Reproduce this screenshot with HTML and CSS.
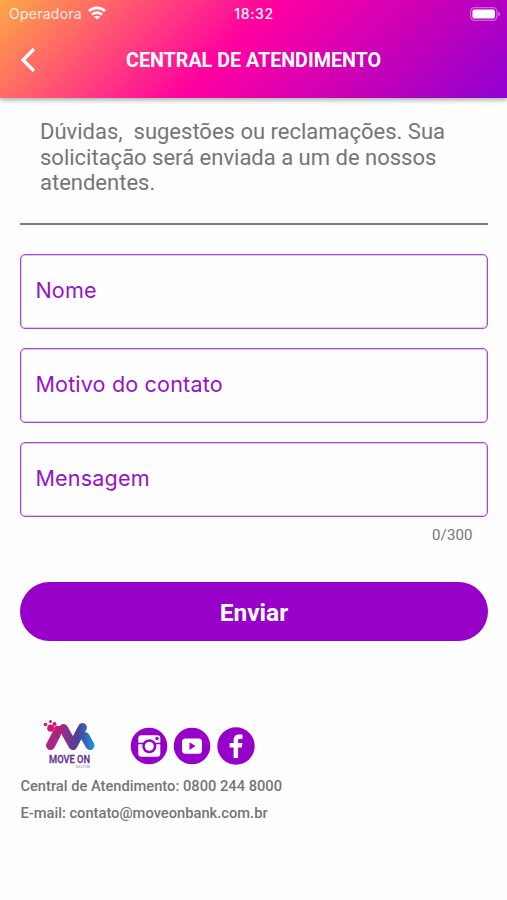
FILE: index.html
```html
<!DOCTYPE html>
<html lang="pt-BR">
<head>
<meta charset="utf-8">
<title>Central de Atendimento</title>
<link rel="stylesheet" href="styles.css">
</head>
<body>
<header class="header">
  <div class="status">
    <div class="carrier"><span>Operadora</span>
      <svg class="wifi" viewBox="0 0 18 14" width="18" height="14" fill="none" stroke="#fff" stroke-width="2.6"><path d="M1 5C5.4.8 12.600.8 17 5M4 8.600c2.800-2.600 7.200-2.600 10 0"/><path d="M9 13.600 6 10.700c1.700-1.400 4.300-1.400 6 0z" fill="#fff" stroke="none"/></svg>
    </div>
    <span class="time">18:32</span>
    <svg class="battery" viewBox="0 0 31 14" width="31" height="14"><rect x=".6" y=".6" width="26.3" height="12.8" rx="4" fill="none" stroke="#fff" stroke-opacity=".4" stroke-width="1.2"/><rect x="2.4" y="2.5" width="22.6" height="9" rx="2" fill="#fff"/><path d="M28.3 4.7c2.2.7 2.2 3.9 0 4.6z" fill="#fff" fill-opacity=".5"/></svg>
  </div>
  <div class="nav">
    <svg class="back" viewBox="0 0 16 26" width="16" height="26" fill="none" stroke="#fff" stroke-width="3.200"><path d="M14 2 3 13l11 11"/></svg>
    <h1 class="title">CENTRAL DE ATENDIMENTO</h1>
    <span></span>
  </div>
</header>
<main class="main">
  <p class="intro">Dúvidas,&nbsp; sugestões ou reclamações. Sua<br>solicitação será enviada a um de nossos<br>atendentes.</p>
  <form class="form">
    <div class="field"><span class="label">Nome</span></div>
    <div class="field"><span class="label">Motivo do contato</span></div>
    <div class="field"><span class="label">Mensagem</span></div>
    <div class="counter">0/300</div>
    <button class="send" type="button">Enviar</button>
  </form>
  <footer class="footer">
    <div class="brands">
      <svg class="logo" viewBox="0 0 60 58" width="60" height="58">
        <defs><linearGradient id="brand" gradientUnits="userSpaceOnUse" x1="6" y1="0" x2="55" y2="0"><stop offset="0" stop-color="#b02384"/><stop offset=".35" stop-color="#9a2a8c"/><stop offset=".65" stop-color="#4b4298"/><stop offset=".82" stop-color="#3468b8"/><stop offset="1" stop-color="#08a5e6"/></linearGradient></defs>
        <g fill="none" stroke="url(#brand)" stroke-width="9" stroke-linecap="round" stroke-linejoin="round"><path d="M10.500 31.500 16.500 20M23.500 14.500 33 31.500 42.500 13.500M45 22.500 50 31.500"/></g>
        <g fill="#cc1873"><circle cx="10.800" cy="14.200" r="3.600"/><circle cx="5.500" cy="10.500" r="1.800"/><circle cx="10.500" cy="7.500" r="1.500"/><circle cx="14.500" cy="10" r="2"/><circle cx="17.500" cy="15" r="3.300"/></g>
        <text class="logo-name" x="9" y="49.300" textLength="41" lengthAdjust="spacingAndGlyphs">MOVE ON</text>
        <text class="logo-tag" x="35.500" y="54" textLength="14.500" lengthAdjust="spacingAndGlyphs">SOLUTION</text>
      </svg>
      <div class="social">
        <svg viewBox="0 0 38 38" width="38" height="38"><circle cx="19" cy="19" r="18.300" fill="#9600c8"/><rect x="8.300" y="8.300" width="22" height="21.500" rx="3" fill="#fff"/><path d="M8 16.500h23" stroke="#9600c8" stroke-width="1.500"/><circle cx="19.300" cy="19.200" r="7" fill="#9600c8"/><circle cx="19.300" cy="19.200" r="4.500" fill="#fff"/><circle cx="27" cy="11.500" r="1.700" fill="#9600c8"/></svg>
        <svg viewBox="0 0 38 38" width="38" height="38"><circle cx="19" cy="19" r="18.300" fill="#9600c8"/><rect x="9" y="11.500" width="20" height="15.300" rx="3.500" fill="#fff"/><path d="m16.500 15.200 6 3.900-6 3.900z" fill="#9600c8"/></svg>
        <svg viewBox="0 0 38 38" width="38" height="38"><circle cx="19" cy="19" r="18.700" fill="#9600c8"/><path d="M16.600 31V20.600h-4v-4.500h4v-3.200c0-3.700 2.200-5.500 5.400-5.500 1.600 0 2.900.1 3.500.2v4.200h-2.200c-1.800 0-2.200.9-2.200 2.200v2.100h4.300l-.6 4.500h-3.700V31z" fill="#fff"/></svg>
      </div>
    </div>
    <p class="contact">Central de Atendimento: 0800 244 8000</p>
    <p class="contact">E-mail: contato@moveonbank.com.br</p>
  </footer>
</main>
</body>
</html>
```
FILE: styles.css
```css
* { box-sizing: border-box; }
body { margin: 0; min-height: 900px; background: #fefefe; font-family: Roboto, "Liberation Sans", sans-serif; color: #757575; }
p, h1 { margin: 0; }
svg { display: block; }
.header { height: 98px; color: #fff; background: linear-gradient(135deg, #ffa844 0%, #ff00a0 46%, #9000d0 100%); box-shadow: 0 2px 5px rgba(0,0,0,.35); }
.status { height: 28px; display: grid; grid-template-columns: 1fr auto 1fr; align-items: center; padding: 0 6px 0 9px; font-family: Inter, sans-serif; }
.carrier { display: flex; align-items: center; gap: 6px; font-size: 14px; letter-spacing: .25px; margin-top: -1px; }
.carrier span { opacity: .85; }
.wifi { margin-top: -1px; }
.time { font-weight: 500; font-size: 14px; letter-spacing: .6px; margin: -1px 2px 0 0; }
.battery { justify-self: end; margin-top: -1px; }
.nav { height: 64px; display: grid; grid-template-columns: 106px auto 106px; align-items: center; padding: 0 20px; }
.title { padding-top: 2px; font-size: 19.700px; line-height: 24px; font-weight: 700; white-space: nowrap; }
.main { padding: 21px 19.500px 0 20.400px; }
.intro { height: 106px; padding-left: 19.600px; border-bottom: 2px solid #7c7c7c; font-size: 22px; line-height: 25.700px; white-space: nowrap; }
.form { padding-top: 29px; }
.field { height: 75px; margin-bottom: 19px; padding: 0 14px; display: flex; align-items: center; border: 1px solid #aa45cc; box-shadow: inset 0 0 0 1px #e6c3f2; border-radius: 5px; color: #9614c4; }
.label { font-family: Inter, sans-serif; font-size: 21.600px; line-height: 26px; letter-spacing: .15px; margin-top: -3px; }
.counter { margin-top: -10px; padding-right: 15px; text-align: right; font-size: 15px; line-height: 18px; letter-spacing: .1px; }
.send { display: block; width: 100%; height: 59px; margin-top: 38px; padding: 2px 0 0; border: 0; border-radius: 30px; background: #9600c8; color: #fff; font: 700 24.500px/28px Roboto, sans-serif; }
.footer { padding-top: 73px; }
.brands { display: flex; gap: 31px; padding-left: 19.600px; }
.social { display: flex; gap: 5.500px; padding-top: 13px; margin-left: -1px; }
.logo { margin-bottom: 1px; }
.logo-name { font: 500 11.700px Roboto, sans-serif; fill: #5d3092; stroke: #5d3092; stroke-width: .3px; }
.logo-tag { font: 4px Roboto, sans-serif; fill: #8d76ad; }
.contact { font-size: 14.700px; line-height: 27px; font-weight: 500; }
```
